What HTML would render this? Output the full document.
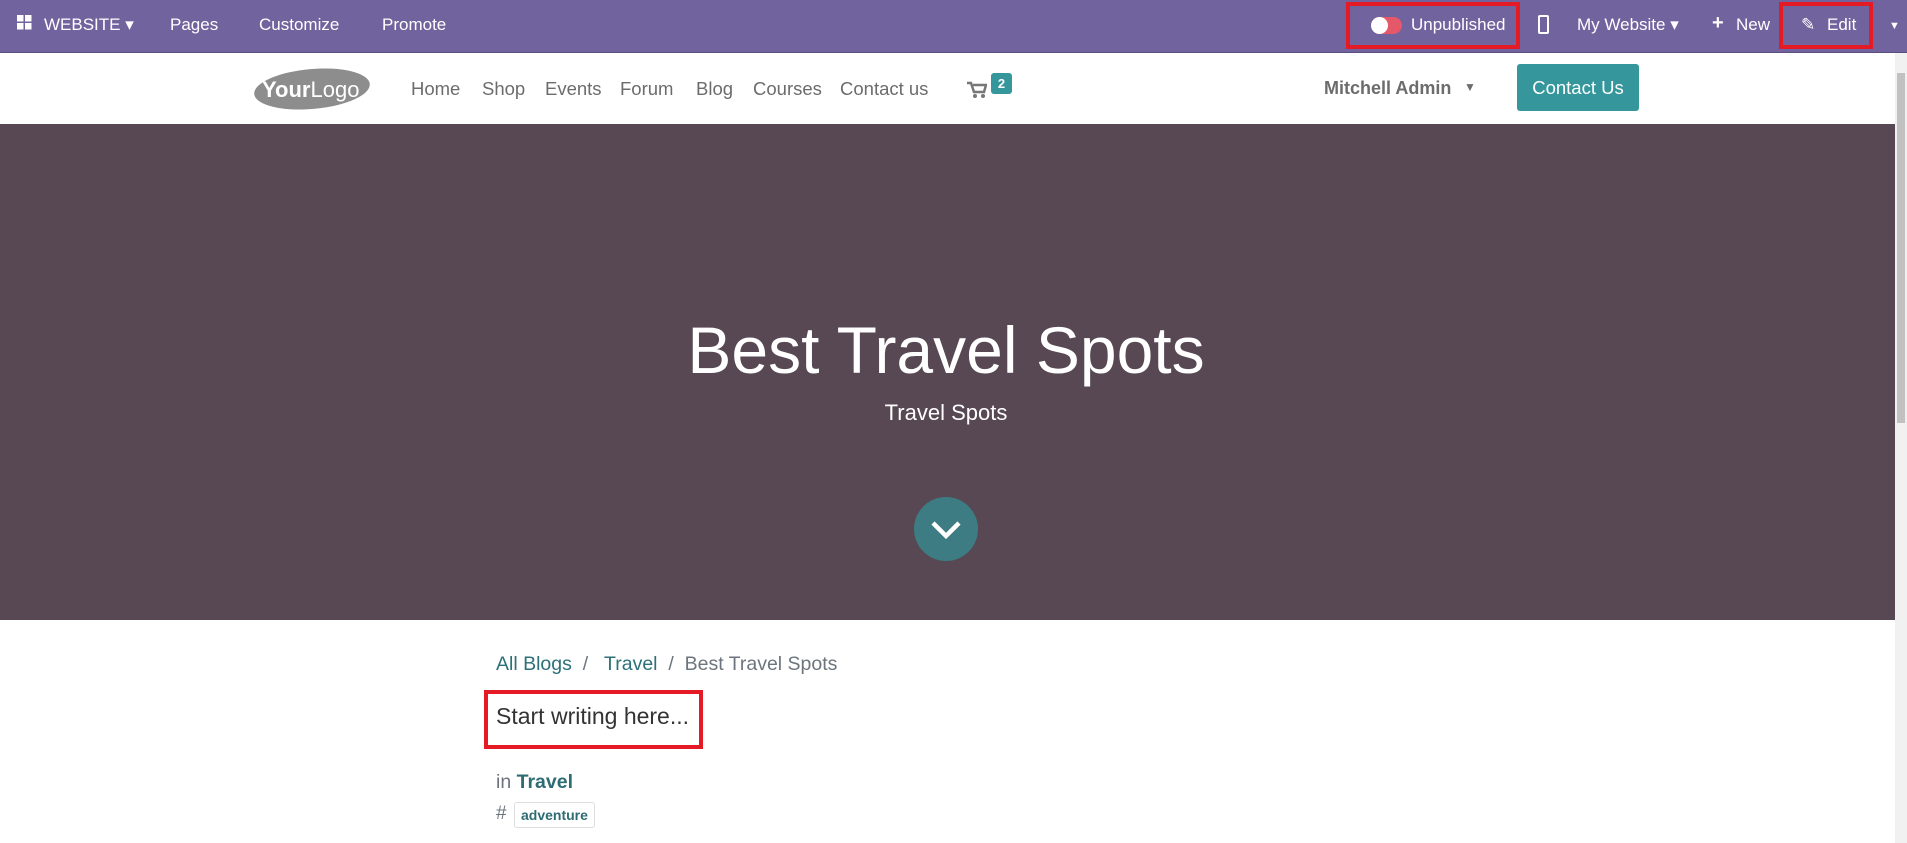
<!DOCTYPE html>
<html><head><meta charset="utf-8"><style>
*{margin:0;padding:0;box-sizing:border-box}
body{width:1907px;height:843px;overflow:hidden;font-family:"Liberation Sans",sans-serif;background:#fff;position:relative}
.a{position:absolute;white-space:nowrap}
#top{position:absolute;left:0;top:0;width:1907px;height:53px;background:#71639e;border-bottom:1px solid #5a4f80}
#top .a{color:#fff;font-size:17px;top:15px}
#nav{position:absolute;left:0;top:53px;width:1895px;height:71px;background:#fff}
#nav .m{color:#6c6c6c;font-size:18.5px;top:25px}
#hero{position:absolute;left:0;top:124px;width:1895px;height:496px;background:#574853}
#sb{position:absolute;left:1895px;top:53px;width:12px;height:790px;background:#f1f1f1}
.red{position:absolute;border:4px solid #e41b24}
</style></head><body>
<div id="top">
  <svg class="a" style="left:17px;top:15px" width="15" height="15"><rect x="0" y="0" width="6.5" height="6.5" fill="#fff"/><rect x="8" y="0" width="6.5" height="6.5" fill="#fff"/><rect x="0" y="8" width="6.5" height="6.5" fill="#fff"/><rect x="8" y="8" width="6.5" height="6.5" fill="#fff"/></svg>
  <div class="a" style="left:44px">WEBSITE ▾</div>
  <div class="a" style="left:170px">Pages</div>
  <div class="a" style="left:259px">Customize</div>
  <div class="a" style="left:382px">Promote</div>
  <div class="red" style="left:1346px;top:2px;width:174px;height:47px"></div>
  <div class="a" style="left:1371px;top:17px;width:31px;height:17px;border-radius:9px;background:#e4586a"></div>
  <div class="a" style="left:1371px;top:17px;width:17px;height:17px;border-radius:50%;background:#fff"></div>
  <div class="a" style="left:1411px">Unpublished</div>
  <div class="a" style="left:1538px;top:15px;width:11px;height:19px;border:2px solid #fff;border-radius:2px"></div>
  <div class="a" style="left:1577px">My Website ▾</div>
  <div class="a" style="left:1712px;font-weight:bold;font-size:20px;top:12px">+</div>
  <div class="a" style="left:1736px">New</div>
  <div class="red" style="left:1779px;top:2px;width:94px;height:47px"></div>
  <div class="a" style="left:1801px;top:15px">✎</div>
  <div class="a" style="left:1827px">Edit</div>
  <div class="a" style="left:1889px;font-size:11px;top:20px">▼</div>
</div>
<div id="nav">
  <svg class="a" style="left:252px;top:12px" width="120" height="48"><ellipse cx="60" cy="24" rx="58" ry="20" fill="#8d8d8d" transform="rotate(-5 60 24)"/><text x="10" y="32" font-family="Liberation Sans" font-size="22" fill="#fff"><tspan font-weight="bold">Your</tspan>Logo</text></svg>
  <div class="a m" style="left:411px">Home</div>
  <div class="a m" style="left:482px">Shop</div>
  <div class="a m" style="left:545px">Events</div>
  <div class="a m" style="left:620px">Forum</div>
  <div class="a m" style="left:696px">Blog</div>
  <div class="a m" style="left:753px">Courses</div>
  <div class="a m" style="left:840px">Contact us</div>
  <svg class="a" style="left:967px;top:28px" width="20" height="18"><path d="M0 2h4l3 9h10l2-7H6" fill="none" stroke="#777" stroke-width="2.5"/><circle cx="8" cy="15" r="2" fill="#777"/><circle cx="16" cy="15" r="2" fill="#777"/></svg>
  <div class="a" style="left:991px;top:20px;width:21px;height:21px;background:#35979c;border-radius:3px;color:#fff;font-size:13px;font-weight:bold;text-align:center;line-height:21px">2</div>
  <div class="a" style="left:1324px;top:25px;color:#6c6c6c;font-size:18px;font-weight:bold">Mitchell Admin</div>
  <div class="a" style="left:1464px;top:27px;color:#6c6c6c;font-size:12px">▼</div>
  <div class="a" style="left:1517px;top:11px;width:122px;height:47px;background:#35979c;border-radius:3px;color:#fff;font-size:18.5px;text-align:center;line-height:47px">Contact Us</div>
</div>
<div id="hero">
  <div class="a" style="left:0;width:1892px;text-align:center;top:188px;color:#fff;font-size:66px;font-weight:300">Best Travel Spots</div>
  <div class="a" style="left:0;width:1892px;text-align:center;top:276px;color:#fff;font-size:22px">Travel Spots</div>
  <div class="a" style="left:914px;top:373px;width:64px;height:64px;border-radius:50%;background:#3c7c82"></div>
  <svg class="a" style="left:930px;top:396px" width="32" height="20"><path d="M3 3l13 13 13-13" fill="none" stroke="#fff" stroke-width="4.5"/></svg>
</div>
<div id="sb"><div style="position:absolute;left:2px;top:20px;width:8px;height:350px;background:#c1c1c1"></div></div>
<div class="a" style="left:496px;top:653px;font-size:19.5px;color:#2c7078">All Blogs <span style="color:#6c757d">&nbsp;/&nbsp;</span>&nbsp; Travel <span style="color:#6c757d">&nbsp;/&nbsp; Best Travel Spots</span></div>
<div class="red" style="left:484px;top:690px;width:219px;height:59px"></div>
<div class="a" style="left:496px;top:703px;font-size:23px;color:#333;font-weight:300">Start writing here...</div>
<div class="a" style="left:496px;top:771px;font-size:19.5px;color:#6c757d">in <b style="color:#2c6c72">Travel</b></div>
<div class="a" style="left:496px;top:803px;font-size:19px;color:#6c757d">#</div>
<div class="a" style="left:514px;top:802px;height:26px;padding:0 6px;border:1px solid #ddd;border-radius:3px;font-size:14px;font-weight:bold;color:#2c6c72;line-height:24px">adventure</div>
</body></html>
